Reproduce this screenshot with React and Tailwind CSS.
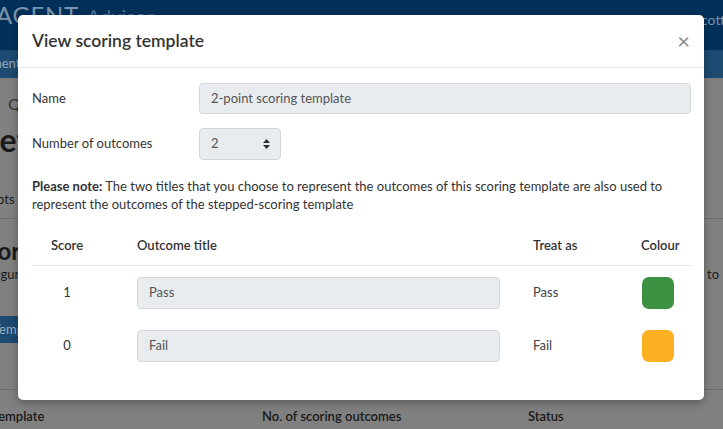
import React from 'react';

const outcomes = [
  { score: 1, title: 'Pass', treat: 'Pass', colour: 'bg-[#3d9142]' },
  { score: 0, title: 'Fail', treat: 'Fail', colour: 'bg-[#fdb022]' },
];

const App = () => {
  return (
    <div className="relative w-[723px] h-[429px] overflow-hidden bg-[#808080] text-[#1f1f1f]" style={{ fontFamily: 'Lato, "Open Sans", sans-serif' }}>
      {/* Page behind the dialog */}
      <div className="h-[50px] bg-[#00305a] flex items-start justify-between pt-[3px]">
        <div className="flex items-baseline gap-2 -ml-[4px] leading-none">
          <span className="text-[24px] text-[#7c93aa] tracking-wide">AGENT</span>
          <span className="text-[20px] text-[#4f6f8e]">Advisor</span>
        </div>
        <span className="text-[14px] text-[#7c93aa] mt-[10px] -mr-[2px] leading-none">Scott</span>
      </div>
      <div className="h-[28px] bg-[#1c4a70] flex items-center">
        <span className="text-[13px] text-[#92a8bc] -ml-[9px]">ment</span>
      </div>
      <div className="pl-[8px] pt-[14px] text-[16px] text-[#333]">Q</div>
      <div className="-ml-[18px] mt-[8px] text-[32px] font-bold leading-none text-[#1a1a1a]">Set</div>
      <div className="-ml-[24px] mt-[34px] text-[13px] text-[#1a1a1a]">Scripts</div>
      <div className="mt-[8px] border-t border-[#6e6e6e]" />
      <div className="flex justify-between mt-[20px]">
        <span className="-ml-[27px] text-[24px] font-bold leading-none text-[#1a1a1a]">Scori</span>
      </div>
      <div className="flex justify-between mt-[2px] text-[13px] text-[#1a1a1a]">
        <span className="-ml-[30px]">Configure</span>
        <span className="mr-[4px]">to</span>
      </div>
      <div className="mt-[32px] h-[27px] w-[40px] bg-[#1c4a70] rounded-r-[3px] flex items-center overflow-hidden">
        <span className="text-[13px] text-[#9ab0c4] -ml-[7px]">Temp</span>
      </div>
      <div className="mt-[46px] border-t border-[#6e6e6e]" />
      <div className="flex text-[13px] font-semibold text-[#1a1a1a] pt-[17px]">
        <span className="-ml-[8px] w-[270px]">Template</span>
        <span className="w-[266px]">No. of scoring outcomes</span>
        <span>Status</span>
      </div>

      {/* Dialog */}
      <div className="absolute left-[18px] top-[15px] w-[686px] bg-white rounded-[5px] shadow-[0_3px_9px_rgba(0,0,0,0.3)] text-[13px] text-[#333]">
        <div className="h-[53px] flex items-center justify-between px-[14px] border-b border-[#e5e5e5]">
          <h1 className="text-[17.5px] text-[#333] font-semibold">View scoring template</h1>
          <span className="text-[22px] leading-none text-[#8a8a8a]">×</span>
        </div>

        <div className="pl-[14px] pr-[13px] pt-[15px] pb-[28px]">
          <div className="flex items-center">
            <div className="w-[167px]">Name</div>
            <div className="flex-1 h-[31px] flex items-center px-[11px] bg-[#e9ecef] border border-[#d4d8dc] rounded-[4px] text-[#555]">
              2-point scoring template
            </div>
          </div>

          <div className="flex items-center mt-[14px]">
            <div className="w-[167px]">Number of outcomes</div>
            <div className="w-[82px] h-[32px] flex items-center justify-between pl-[11px] pr-[10px] bg-[#e9ecef] border border-[#d4d8dc] rounded-[4px] text-[#555]">
              <span>2</span>
              <svg width="7" height="10" viewBox="0 0 7 10">
                <path d="M3.5 0 L7 4 L0 4 Z" fill="#333" />
                <path d="M3.5 10 L7 6 L0 6 Z" fill="#333" />
              </svg>
            </div>
          </div>

          <p className="mt-[17px] leading-[18px]">
            <span className="font-bold">Please note:</span> The two titles that you choose to represent the outcomes of this scoring template are also used to represent the outcomes of the stepped-scoring template
          </p>

          <div className="mt-[13px]">
            <div className="grid grid-cols-[105px_396px_108px_1fr] h-[40px] items-center border-b border-[#e3e7ea] font-semibold">
              <div className="w-[70px] text-center">Score</div>
              <div>Outcome title</div>
              <div>Treat as</div>
              <div>Colour</div>
            </div>
            {outcomes.map((o) => (
              <div key={o.score} className="grid grid-cols-[105px_396px_108px_1fr] h-[53px] items-center">
                <div className="w-[70px] text-center">{o.score}</div>
                <div className="w-[363px] h-[32px] flex items-center px-[11px] bg-[#e9ecef] border border-[#d4d8dc] rounded-[4px] text-[#555]">
                  {o.title}
                </div>
                <div className="text-[#444]">{o.treat}</div>
                <div className={`ml-[1px] w-[32px] h-[32px] rounded-[7px] ${o.colour}`} />
              </div>
            ))}
          </div>
        </div>
      </div>
    </div>
  );
};

export default App;
